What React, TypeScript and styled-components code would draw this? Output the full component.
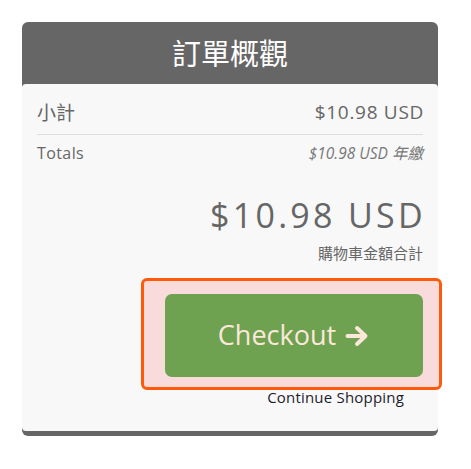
import React from "react";
import styled, { createGlobalStyle } from "styled-components";

const GlobalStyle = createGlobalStyle`
  html, body {
    margin: 0;
    padding: 0;
    background: #ffffff;
  }
  body {
    font-family: "Open Sans", "Noto Sans CJK TC", sans-serif;
  }
  * { box-sizing: border-box; }
`;

const Page = styled.div`
  padding: 22px 0 0 22px;
`;

const Card = styled.section`
  width: 416px;
  background: #666666;
  border-radius: 6px;
  padding-bottom: 5px;
`;

const Header = styled.h2`
  margin: 0;
  height: 62px;
  display: flex;
  align-items: center;
  justify-content: center;
  color: #ffffff;
  font-family: "Noto Sans CJK TC", sans-serif;
  font-weight: 400;
  font-size: 29px;
  padding-bottom: 2px;
`;

const Body = styled.div`
  background: #f8f8f8;
  border-radius: 4px;
  padding: 16px 15px 24px 15px;
  display: flex;
  flex-direction: column;
  color: #666666;
`;

const Row = styled.div<{ $divider?: boolean }>`
  display: flex;
  justify-content: space-between;
  align-items: center;
  padding-bottom: ${(p) => (p.$divider ? "10px" : "0")};
  border-bottom: ${(p) => (p.$divider ? "1px solid #dddddd" : "none")};
`;

const Label = styled.span<{ $size: number }>`
  font-size: ${(p) => p.$size}px;
  line-height: 24px;
  font-family: "Noto Sans CJK TC", sans-serif;
  color: #666666;
`;

const Amount = styled.span`
  font-size: 19px;
  line-height: 24px;
  letter-spacing: 0.7px;
  margin-right: -1px;
  color: #666666;
`;

const TotalsRow = styled(Row)`
  margin-top: 8px;
`;

const Small = styled.span`
  font-size: 16px;
  line-height: 20px;
  letter-spacing: 0.4px;
  color: #666666;
`;

const Recurring = styled.span`
  font-size: 15.5px;
  line-height: 20px;
  font-style: italic;
  color: #777777;
`;

const GrandTotal = styled.div`
  margin-top: 32px;
  text-align: right;
  font-size: 34px;
  line-height: 40px;
  letter-spacing: 3.3px;
  margin-right: -3px;
  color: #666666;
`;

const CartLabel = styled.div`
  margin-top: 8px;
  text-align: right;
  font-size: 15px;
  line-height: 20px;
  font-family: "Noto Sans CJK TC", sans-serif;
  color: #666666;
`;

const ButtonRow = styled.div`
  margin-top: 31px;
  display: flex;
  justify-content: flex-end;
`;

const Highlight = styled.div`
  position: relative;
  &::before {
    content: "";
    position: absolute;
    left: -24px;
    right: -19px;
    top: -16px;
    bottom: -13px;
    border: 3px solid #ff5a0a;
    border-radius: 6px;
    background: #f9dbdb;
  }
`;

const CheckoutButton = styled.button`
  position: relative;
  width: 258px;
  height: 83px;
  border: none;
  border-radius: 7px;
  background: #6ea150;
  color: #fce8da;
  font-family: "Open Sans", sans-serif;
  font-size: 27px;
  display: flex;
  align-items: center;
  justify-content: center;
  gap: 9px;
  padding: 0 0 2px 0;
  cursor: pointer;
`;

const ArrowIcon = styled.svg`
  width: 25px;
  height: 22px;
  margin-top: 2px;
`;

const ContinueLink = styled.a`
  position: relative;
  margin-top: 10px;
  align-self: flex-end;
  margin-right: 19px;
  font-size: 15px;
  line-height: 20px;
  color: #1c1c2c;
  text-decoration: none;
  letter-spacing: 0.2px;
`;

export default function App() {
  return (
    <>
      <GlobalStyle />
      <Page>
        <Card>
          <Header>訂單概觀</Header>
          <Body>
            <Row $divider>
              <Label $size={19}>小計</Label>
              <Amount>$10.98 USD</Amount>
            </Row>
            <TotalsRow>
              <Small>Totals</Small>
              <Recurring>$10.98 USD 年繳</Recurring>
            </TotalsRow>
            <GrandTotal>$10.98 USD</GrandTotal>
            <CartLabel>購物車金額合計</CartLabel>
            <ButtonRow>
              <Highlight>
                <CheckoutButton type="button">
                  Checkout
                  <ArrowIcon viewBox="0 0 25 22" fill="none">
                    <path
                      d="M2.5 11 H20 M12 3 L20.5 11 L12 19"
                      stroke="currentColor"
                      strokeWidth="4"
                      strokeLinecap="round"
                      strokeLinejoin="round"
                    />
                  </ArrowIcon>
                </CheckoutButton>
              </Highlight>
            </ButtonRow>
            <ContinueLink href="#">Continue Shopping</ContinueLink>
          </Body>
        </Card>
      </Page>
    </>
  );
}
